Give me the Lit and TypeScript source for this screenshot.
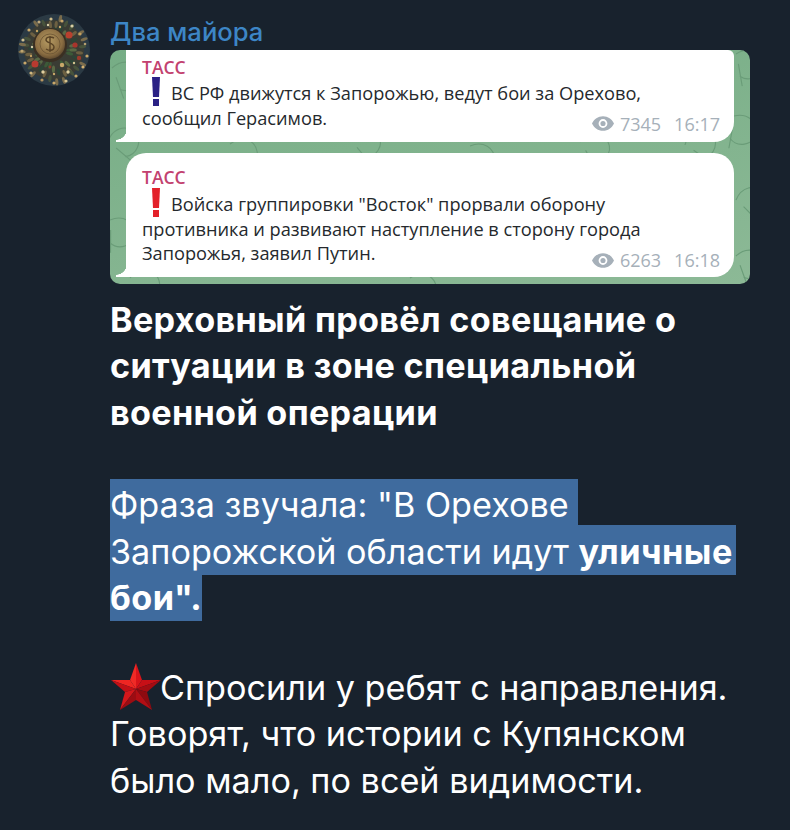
import { LitElement, html, css, svg } from "lit";
import { customElement } from "lit/decorators.js";

// faint doodles of the chat wallpaper, [x, y, rotation]
const DOODLES: Array<[number, number, number]> = [
  [2, 18, 10], [-2, 92, -20], [0, 170, 30], [120, 94, 15], [240, 90, -10],
  [360, 96, 30], [470, 92, 0], [575, 95, -25], [626, 4, 20], [624, 66, 40],
  [626, 150, -15], [626, 206, 10], [20, 228, 0], [300, 228, 20],
];

// beads around the avatar's medallion, [x, y, r, colour]
const BEADS: Array<[number, number, number, string]> = [
  [33, 5, 1.6, "#cdbb8a"], [44, 7, 1.6, "#c9a86a"], [54, 12, 1.6, "#d8cfa8"],
  [62, 20, 1.6, "#c4a060"], [67, 30, 1.3, "#b5a070"], [69, 42, 1.6, "#c9a86a"],
  [65, 53, 1.6, "#d4b070"], [58, 62, 1.6, "#c9a86a"], [48, 67, 1.6, "#d4c390"],
  [36, 69, 1.6, "#c9a86a"], [24, 66, 1.6, "#b99660"], [13, 59, 1.6, "#d0b880"],
  [7, 49, 1.6, "#c9a86a"], [4, 37, 1.6, "#bda570"], [5, 26, 1.6, "#d0c090"],
  [11, 16, 1.6, "#c9a86a"], [21, 8, 1.6, "#bca87c"], [17, 50, 3.5, "#b83a30"],
  [51, 21, 3.5, "#b8402e"], [57, 31, 2.6, "#a8342c"], [44, 51, 2.2, "#c9a86a"],
  [61, 44, 2.2, "#9c3a2c"], [25, 58, 1.7, "#e0d0a0"], [50, 58, 1.7, "#e0d0a0"],
  [14, 33, 1.2, "#d8cfa8"], [19, 17, 1.2, "#c4a060"], [30, 11, 1.2, "#d8cfa8"],
  [42, 13, 1.2, "#c9a86a"], [56, 49, 1.2, "#d4c390"], [36, 60, 1.2, "#c9a86a"],
  [13, 42, 1.2, "#c4a060"], [32, 53, 1.4, "#8e3a2a"],
];

// leaves scattered under the medallion, spread over the ring by index
const LEAVES = Array.from({ length: 60 }, (_, i) => {
  const angle = i * 2.399;
  const dist = 16 + (i % 6) * 3.2;
  return {
    x: 36 + Math.cos(angle) * dist,
    y: 36 + Math.sin(angle) * dist,
    a: (angle * 180) / Math.PI,
    c: ["#3c5a38", "#5a6a45", "#2c4436", "#6d6042", "#47533c", "#7a6c4c"][i % 6],
  };
});

const avatar = html`<svg class="avatar" viewBox="0 0 72 72">
  <defs>
    <radialGradient id="gold" cx="0.45" cy="0.4" r="0.65">
      <stop offset="0" stop-color="#b59a62"></stop>
      <stop offset="0.7" stop-color="#8a6d42"></stop>
      <stop offset="1" stop-color="#54412a"></stop>
    </radialGradient>
  </defs>
  <circle cx="36" cy="36" r="36" fill="#2b3a44"></circle>
  <circle cx="36" cy="36" r="30" fill="#3a3c34"></circle>
  ${LEAVES.map(
    (l) => svg`<ellipse cx=${l.x} cy=${l.y} rx="3.6" ry="1.6" fill=${l.c}
      transform="rotate(${l.a} ${l.x} ${l.y})"></ellipse>`,
  )}
  <circle cx="32" cy="31" r="17" fill="#3a2f22"></circle>
  <circle cx="32" cy="30" r="15" fill="url(#gold)"></circle>
  <circle cx="32" cy="30" r="10" fill="none" stroke="#6b5433" stroke-width="0.8"></circle>
  <path d="M36 24c-4-2-8-1-8 2s8 3 8 7-5 4-8 2M32 22v16" fill="none" stroke="#5a4325" stroke-width="1.4"></path>
  ${BEADS.map(([x, y, r, c]) => svg`<circle cx=${x} cy=${y} r=${r} fill=${c}></circle>`)}
</svg>`;

const eye = html`<svg class="eye" viewBox="0 0 24 16">
  <path fill-rule="evenodd" fill="currentColor"
    d="M12 0C6.600 0 2.200 3.300 0 8c2.200 4.700 6.600 8 12 8s9.800-3.300 12-8c-2.200-4.700-6.600-8-12-8zm0 3.200a4.800 4.800 0 1 1 0 9.600 4.800 4.800 0 0 1 0-9.600z"></path>
  <circle cx="12" cy="8" r="2.800" fill="currentColor"></circle>
</svg>`;

const mark = (color: string) => html`<svg class="mark" viewBox="0 0 8 29">
  <path d="M0 0h8l-1 20H1z" fill=${color}></path>
  <rect x="1" y="22" width="6" height="7" fill=${color}></rect>
</svg>`;

const star = html`<svg class="star" viewBox="0 0 50 47">
  <polygon points="25,0 31,17 25,26" fill="#d8141a"></polygon>
  <polygon points="25,0 19,17 25,26" fill="#f02a26"></polygon>
  <polygon points="50,17 31,17 25,26" fill="#c80f16"></polygon>
  <polygon points="50,17 36,29 25,26" fill="#a50c12"></polygon>
  <polygon points="0,17 19,17 25,26" fill="#ee2622"></polygon>
  <polygon points="0,17 14,29 25,26" fill="#c21016"></polygon>
  <polygon points="41,47 36,29 25,26" fill="#8e0a10"></polygon>
  <polygon points="41,47 25,37 25,26" fill="#b20e14"></polygon>
  <polygon points="9,47 14,29 25,26" fill="#d4171b"></polygon>
  <polygon points="9,47 25,37 25,26" fill="#9c0c12"></polygon>
</svg>`;

@customElement("app-root")
export class AppRoot extends LitElement {
  static styles = css`
    :host {
      display: block;
      width: 790px;
      height: 830px;
      overflow: hidden;
      background: #18222d;
      color: #fff;
      font-family: Inter, "Liberation Sans", sans-serif;
    }
    .post {
      display: flex;
      gap: 20px;
      padding: 14px 0 0 18px;
    }
    .avatar {
      flex: none;
      width: 72px;
      height: 72px;
    }
    .content {
      width: 640px;
    }
    .name {
      height: 36px;
      font-size: 25.6px;
      font-weight: 500;
      line-height: 36px;
      color: #3d86c6;
    }
    .media {
      position: relative;
      overflow: hidden;
      height: 234px;
      box-sizing: border-box;
      padding: 0 16px 7px;
      border-radius: 10px;
      background: linear-gradient(170deg, #76ad85, #8cb996);
      display: flex;
      flex-direction: column;
      gap: 11px;
      font-family: "Open Sans", "Liberation Sans", sans-serif;
      color: #25292d;
    }
    .doodles {
      position: absolute;
      inset: 0;
      width: 100%;
      height: 100%;
    }
    .bubble {
      position: relative;
      background: #fff;
      border-radius: 20px 20px 20px 0;
      padding: 5px 14px 0 16px;
      font-size: 18.2px;
      line-height: 24.5px;
      white-space: nowrap;
    }
    .bubble::before {
      content: "";
      position: absolute;
      left: -10px;
      bottom: 0;
      width: 11px;
      height: 13px;
      background: radial-gradient(circle at 0 0, transparent 10.5px, #fff 11px);
    }
    .bubble.first {
      height: 92px;
      box-sizing: border-box;
      border-radius: 0 6px 20px 0;
      padding-top: 5px;
    }
    .bubble.second {
      height: 124px;
      box-sizing: border-box;
      padding-top: 12px;
    }
    .source {
      font-size: 17.5px;
      font-weight: 600;
      line-height: 24px;
      color: #c2416f;
    }
    .first .source {
      margin-bottom: 2px;
    }
    .second .source {
      margin-bottom: 3px;
    }
    .line {
      display: flex;
      align-items: center;
    }
    .mark {
      flex: none;
      width: 8px;
      height: 29px;
      margin: -8px 11px -4px 10px;
    }
    .last {
      display: flex;
      justify-content: space-between;
    }
    .meta {
      display: flex;
      align-items: center;
      padding-top: 6px;
      font-size: 18px;
      color: #a6b0b9;
    }
    .second .meta {
      padding-top: 7px;
    }
    .eye {
      width: 22px;
      height: 15px;
      margin-right: 6px;
    }
    .time {
      margin-left: 13px;
    }
    .text {
      margin-top: 13px;
      font-size: 34.2px;
      line-height: 46.3px;
    }
    .text p {
      margin: 0;
    }
    .heading {
      font-weight: 700;
      letter-spacing: 0.3px;
    }
    .text .quote {
      margin-top: 43.3px;
    }
    .text .story {
      margin-top: 44px;
    }
    .hl {
      display: block;
      width: fit-content;
      background: #3f6b9e;
    }
    .hl b {
      font-weight: 700;
      letter-spacing: 0.5px;
    }
    .hl.l1 {
      padding: 5px 0 0;
      line-height: 41px;
    }
    .hl.l2 {
      padding: 6px 3px 2px 0;
      line-height: 42px;
    }
    .hl.l3 {
      line-height: 46px;
    }
    .star {
      display: inline-block;
      width: 50px;
      height: 47px;
      margin: -14px -1px -10px 1px;
      vertical-align: 0;
    }
  `;

  render() {
    return html`
      <div class="post">
        ${avatar}
        <div class="content">
          <div class="name">Два майора</div>
          <div class="media">
            <svg class="doodles" viewBox="0 0 640 234">
              ${DOODLES.map(
                ([x, y, r]) => svg`<path
                  transform="translate(${x} ${y}) rotate(${r}) scale(1.4)"
                  d="M0 0c6-8 16-8 20 0s-4 16-12 14M4 6l8 14"
                  fill="none" stroke="#6a9c78" stroke-width="0.8"></path>`,
              )}
            </svg>
            <div class="bubble first">
              <div class="source">ТАСС</div>
              <div class="line">${mark("#2b2185")}ВС РФ движутся к Запорожью, ведут бои за Орехово,</div>
              <div class="last">
                <span>сообщил Герасимов.</span>
                <span class="meta">${eye}7345<span class="time">16:17</span></span>
              </div>
            </div>
            <div class="bubble second">
              <div class="source">ТАСС</div>
              <div class="line">${mark("#e3212a")}Войска группировки "Восток" прорвали оборону</div>
              <div>противника и развивают наступление в сторону города</div>
              <div class="last">
                <span>Запорожья, заявил Путин.</span>
                <span class="meta">${eye}6263<span class="time">16:18</span></span>
              </div>
            </div>
          </div>
          <div class="text">
            <p class="heading">Верховный провёл совещание о<br />ситуации в зоне специальной<br />военной операции</p>
            <p class="quote">
              <span class="hl l1">Фраза звучала: "В Орехове&nbsp;</span>
              <span class="hl l2">Запорожской области идут <b>уличные</b></span>
              <span class="hl l3"><b>бои".</b></span>
            </p>
            <p class="story">${star}Спросили у ребят с направления.<br />Говорят, что истории с Купянском<br />было мало, по всей видимости.</p>
          </div>
        </div>
      </div>
    `;
  }
}

declare global {
  interface HTMLElementTagNameMap {
    "app-root": AppRoot;
  }
}
